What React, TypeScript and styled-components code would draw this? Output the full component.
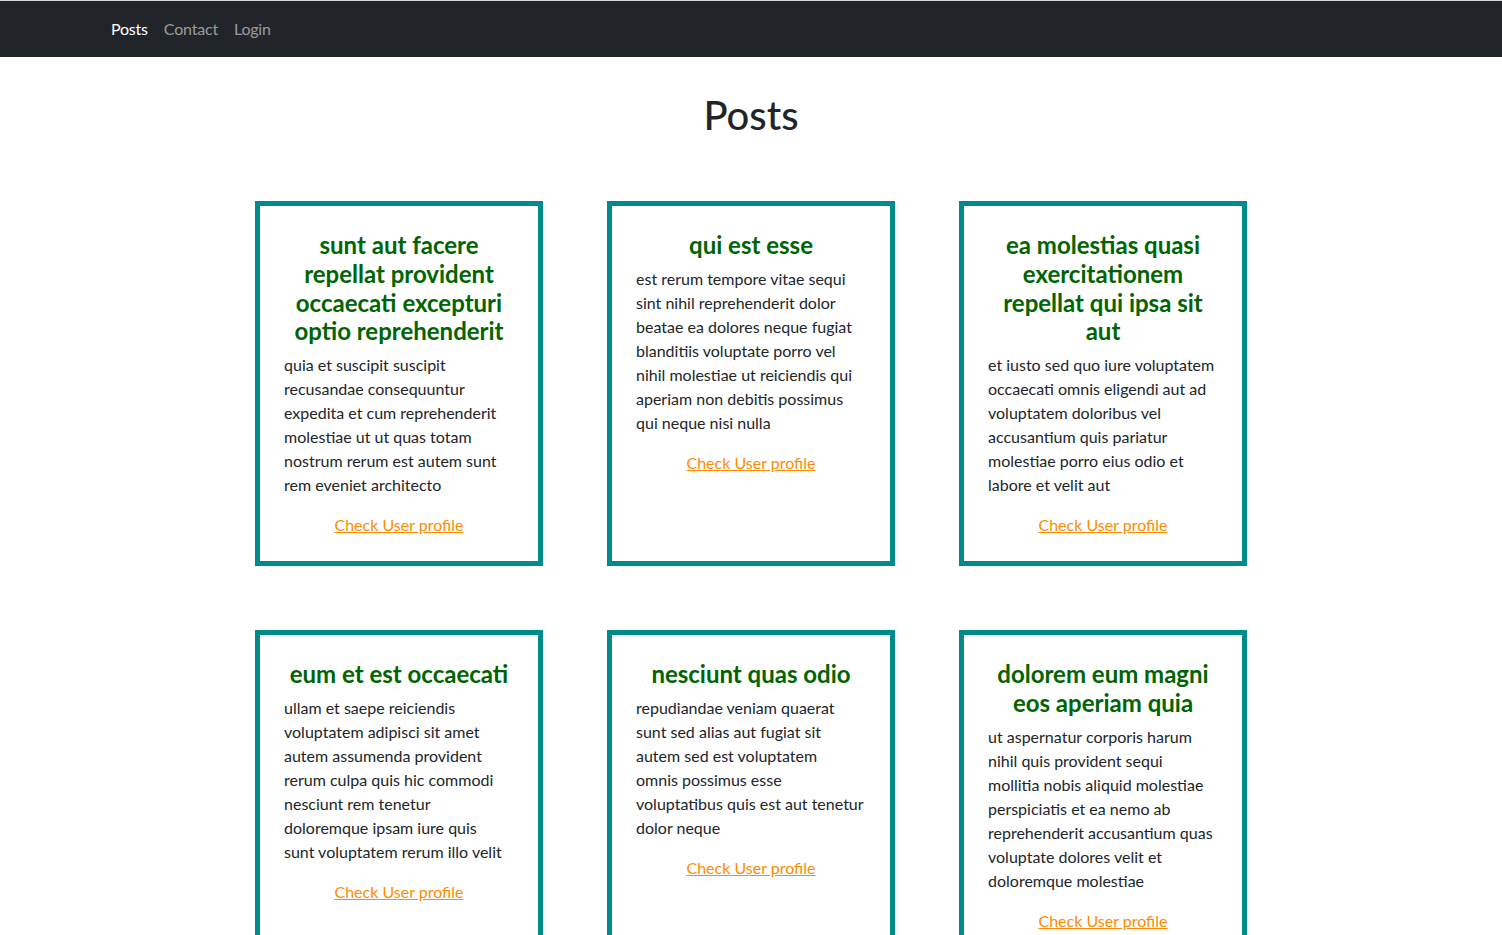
import React from "react";
import styled, { createGlobalStyle } from "styled-components";

const GlobalStyle = createGlobalStyle`
  * { box-sizing: border-box; }
  body {
    margin: 0;
    font-family: Lato, "Liberation Sans", sans-serif;
    font-size: 16px;
    line-height: 1.5;
    color: #212529;
    background: #fff;
  }
`;

const Navbar = styled.nav`
  border-top: 1px solid #d6d6d6;
  background: #212529;
  padding: 8px 0;
`;

const NavContainer = styled.div`
  width: 1320px;
  margin: 0 auto;
  padding: 0 12px;
  display: flex;
  align-items: center;
`;

const NavLink = styled.a<{ $active?: boolean }>`
  display: block;
  padding: 8px;
  font-size: 16px;
  line-height: 24px;
  letter-spacing: -0.2px;
  text-decoration: none;
  color: ${(p) => (p.$active ? "#ffffff" : "rgba(255, 255, 255, 0.55)")};
  cursor: pointer;
`;

const Main = styled.main`
  display: flex;
  flex-direction: column;
  align-items: center;
`;

const PageTitle = styled.h1`
  margin: 34px 0 62px;
  font-size: 40px;
  line-height: 1.2;
  font-weight: 500;
  color: #212529;
  text-align: center;
`;

const Grid = styled.div`
  display: grid;
  grid-template-columns: repeat(3, 288px);
  gap: 64px;
  padding-bottom: 48px;
`;

const Card = styled.article`
  border: 5px solid #008b8b;
  padding: 25px 24px 24px;
  display: flex;
  flex-direction: column;
`;

const CardTitle = styled.h2`
  margin: 0 0 7px;
  font-size: 24px;
  line-height: 1.2;
  font-weight: 700;
  color: #006400;
  text-align: center;
`;

const CardBody = styled.p`
  margin: 0 -8px 16px 0;
  font-size: 16px;
  line-height: 24px;
  color: #212529;
  white-space: pre-line;
`;

const ProfileLink = styled.a`
  align-self: center;
  font-size: 16px;
  line-height: 24px;
  color: #ff8c00;
  text-decoration: underline;
  cursor: pointer;
`;

const posts = [
  {
    id: 1,
    title: "sunt aut facere repellat provident occaecati excepturi optio reprehenderit",
    body: [
      "quia et suscipit suscipit",
      "recusandae consequuntur",
      "expedita et cum reprehenderit",
      "molestiae ut ut quas totam",
      "nostrum rerum est autem sunt",
      "rem eveniet architecto",
    ],
  },
  {
    id: 2,
    title: "qui est esse",
    body: [
      "est rerum tempore vitae sequi",
      "sint nihil reprehenderit dolor",
      "beatae ea dolores neque fugiat",
      "blanditiis voluptate porro vel",
      "nihil molestiae ut reiciendis qui",
      "aperiam non debitis possimus",
      "qui neque nisi nulla",
    ],
  },
  {
    id: 3,
    title: "ea molestias quasi exercitationem repellat qui ipsa sit aut",
    body: [
      "et iusto sed quo iure voluptatem",
      "occaecati omnis eligendi aut ad",
      "voluptatem doloribus vel",
      "accusantium quis pariatur",
      "molestiae porro eius odio et",
      "labore et velit aut",
    ],
  },
  {
    id: 4,
    title: "eum et est occaecati",
    body: [
      "ullam et saepe reiciendis",
      "voluptatem adipisci sit amet",
      "autem assumenda provident",
      "rerum culpa quis hic commodi",
      "nesciunt rem tenetur",
      "doloremque ipsam iure quis",
      "sunt voluptatem rerum illo velit",
    ],
  },
  {
    id: 5,
    title: "nesciunt quas odio",
    body: [
      "repudiandae veniam quaerat",
      "sunt sed alias aut fugiat sit",
      "autem sed est voluptatem",
      "omnis possimus esse",
      "voluptatibus quis est aut tenetur",
      "dolor neque",
    ],
  },
  {
    id: 6,
    title: "dolorem eum magni eos aperiam quia",
    body: [
      "ut aspernatur corporis harum",
      "nihil quis provident sequi",
      "mollitia nobis aliquid molestiae",
      "perspiciatis et ea nemo ab",
      "reprehenderit accusantium quas",
      "voluptate dolores velit et",
      "doloremque molestiae",
    ],
  },
];

export default function App() {
  return (
    <>
      <GlobalStyle />
      <Navbar>
        <NavContainer>
          <NavLink $active>Posts</NavLink>
          <NavLink>Contact</NavLink>
          <NavLink>Login</NavLink>
        </NavContainer>
      </Navbar>
      <Main>
        <PageTitle>Posts</PageTitle>
        <Grid>
          {posts.map((p) => (
            <Card key={p.id}>
              <CardTitle>{p.title}</CardTitle>
              <CardBody>{p.body.join("\n")}</CardBody>
              <ProfileLink>Check User profile</ProfileLink>
            </Card>
          ))}
        </Grid>
      </Main>
    </>
  );
}
